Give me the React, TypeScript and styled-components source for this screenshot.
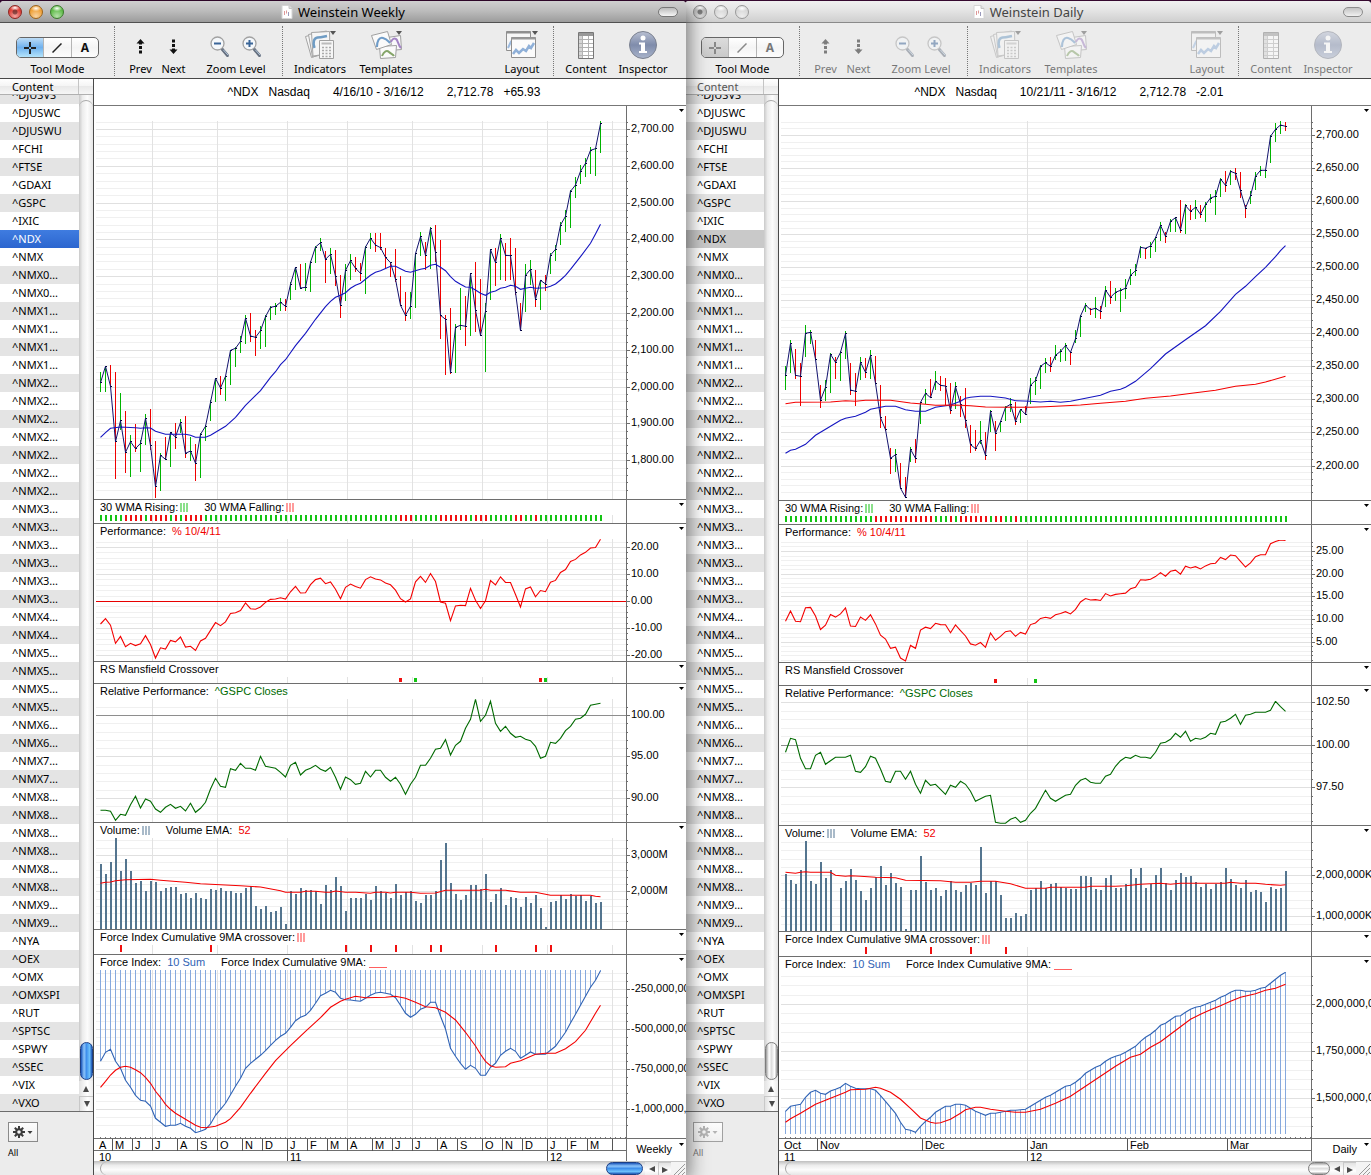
import React from 'react';
import styled, { createGlobalStyle, css } from 'styled-components';

/* ---------- data ---------- */

type Bar = { close: number; up: boolean; high: number; low: number };
type Point = [number, number];

const parseBars = (s: string): Bar[] =>
  s.trim().split(/\s+/).map((t) => {
    const m = /^(\d+)([gr])(\d+)-(\d+)$/.exec(t)!;
    return { close: +m[1], up: m[2] === 'g', high: +m[3], low: +m[4] };
  });

const parseKeyed = (s: string): Point[] =>
  s.trim().split(/\s+/).map((t) => t.split(':').map(Number) as Point);

const parseSeries = (s: string): Point[] => s.trim().split(/\s+/).map((t, i) => [i, Number(t)] as Point);

const parseRuns = (s: string): boolean[] => {
  const out: boolean[] = [];
  for (const m of s.matchAll(/(\d+)([gr])/g)) for (let i = 0; i < +m[1]; i++) out.push(m[2] === 'g');
  return out;
};

/* Samples are stored in thirds of a pixel below the `from` line of their series. */
const STEP = 5;
const FIRST = 6.5;
const px = (i: number) => FIRST + i * STEP;
const py = (from: number, v: number) => from + v / 3;

const weeklyBars = parseBars(`848g816-876 799g800-876 859r795-862 1025r816-1137 962g879-990 1057r933-1119 1025g1005-1131 1046r972-1056
1030g1020-1116 955g942-1035 1037r927-1050 1160r1023-1194 1066g1060-1173 1078r1011-1078 998g998-1101 1011r969-1047 967g957-1000
1060r948-1074 1053g1010-1083 1090r1032-1143 1003g1000-1134 979g975-1023 907g900-963 835g835-906 864r828-885 829g829-903
751g750-855 745g741-801 724g708-759 655g645-732 708r639-726 712r690-768 692g678-747 650g645-741 622g618-660 619g609-645
607g594-633 619r597-633 553g546-600 502g502-570 564r492-564 562g489-573 487g483-576 441g438-489 428g414-453 478r453-549
463g444-522 529r450-558 616r525-654 511g492-603 482g462-540 505r471-516 520r489-543 441g438-582 415g399-447 435r399-456
443r399-450 472r444-507 488r486-531 538r447-547 616r528-618 646r575-663 619g575-657 461g458-624 410g396-468 466r426-510
385g381-507 458r375-487 646r420-717 658r645-825 818r624-822 682g672-819 676g564-690 679r588-738 521g518-708 631r486-696
706r537-706 634g609-816 449g447-600 488r444-558 415g402-540 466r429-543 467r414-540 577r444-585 692r609-692 526g492-636
508g480-555 598r510-621 541g540-630 552r525-573 465g460-522 448g435-483 375g366-435 349g330-396 274g270-384 255g231-294
214g195-252 190g174-231 151g141-222 146g144-228 71g63-159`);

const dailyBars = parseBars(`826g798-870 730g720-819 826r747-837 829r789-918 700g675-771 697g690-732 778r720-780 901r855-924
862g840-903 763g760-879 787r771-837 757g754-843 701g693-777 870r789-885 874r819-918 787g771-840 817r774-834 766g750-837
850r768-852 953r855-984 989r948-992 1075r1044-1122 1064g1047-1116 1165r1089-1168 1192r1131-1192 1048g1041-1086
1075r1017-1089 907g905-972 880g867-912 893r837-895 844g813-870 856r828-873 858r834-916 932r849-942 860g846-927
912r888-951 961r864-984 1034r975-1059 1046r990-1053 1021g963-1032 1066r996-1080 934g930-996 1000r963-1053 965g962-996
922g918-963 913g894-936 964r906-975 928g928-969 943r918-945 856g834-912 841g831-885 799g796-867 788g774-819 799r771-816
766g735-780 754g748-786 737g729-783 757r755-795 716g690-729 648g645-711 615g609-636 629r624-645 625g591-654 634r618-657
570g558-621 592r543-612 577g564-603 571g564-636 565g537-597 526g507-555 512g492-528 442g438-474 445r445-477 438g426-474
413g410-456 376g366-423 409r396-429 364g357-396 353g350-396 390r300-399 317g312-402 334r315-360 322g300-357 343r315-354
314g306-366 294g282-309 289g270-345 237g234-291 256r213-276 214g210-255 220r204-240 272r216-294 324r316-354 287g273-312
229g216-270 211g198-228 211g209-234 109g106-189 88g69-126 75g63-102 79r66-93`);

const weeklyAverage = parseKeyed(`0:1012 1:998 2:985 4:981 5:982 7:983 8:985 9:983 10:984 11:994 13:1003 17:1003 18:1006 19:1012 21:1012
22:1006 25:979 27:952 29:916 32:872 34:832 35:815 36:794 37:779 39:737 41:700 43:658 45:620 46:604 47:592 48:586 49:578 50:565
51:556 52:550 54:526 55:517 56:512 58:499 59:499 60:506 61:514 62:517 64:508 65:505 66:496 67:493 68:502 69:512 70:530 71:544
72:553 73:561 74:562 75:570 76:580 77:586 78:577 79:573 80:565 81:562 82:556 83:559 84:568 85:565 86:562 87:565 89:563 90:559
91:552 92:540 93:526 94:508 96:470 98:430 99:402 100:373`);
const dailyAverage = parseKeyed(`0:1060 1:1051 2:1048 4:1033 6:1006 9:979 11:961 12:955 14:949 16:937 17:928 20:919 22:919 24:929 26:934
28:934 30:922 33:915 35:904 36:895 37:892 39:889 41:889 44:894 46:902 49:904 51:906 53:904 55:907 57:904 60:895 63:886 65:874
67:868 68:862 70:844 73:806 76:762 80:719 84:677 87:634 90:583 92:559 94:530 96:502 98:470 99:452 100:437`);
const dailyLongAverage = parseKeyed(`0:911 2:907 9:906 12:902 14:904 16:901 21:901 25:909 28:913 30:916 34:915 37:917 40:921 45:922 49:922
52:920 56:917 59:915 63:910 68:904 72:895 77:888 82:878 86:871 90:859 94:853 96:846 100:829`);

const weeklyRelative = parseSeries(`946 946 949 976 958 961 929 904 939 912 919 942 952 937 928 940 934 948 925 952 940 922 882 850 874 877
821 826 805 820 820 826 784 814 817 820 832 846 811 802 840 826 820 811 823 829 817 847 883 846 854 868 865 829 846 826 826 847 859
847 868 898 868 847 811 811 790 763 760 734 780 751 739 700 673 613 679 661 619 685 709 694 715 727 724 733 737 754 790 784 742 745
730 707 694 673 670 658 631 628 625`);
const dailyRelative = parseSeries(`772 730 734 790 821 821 781 772 808 797 787 787 787 781 829 832 815 784 790 822 859 862 829 829 853 829
868 895 856 871 868 883 898 871 877 859 868 889 919 911 904 901 982 985 985 973 967 982 976 955 940 913 886 910 919 910 901 898 871
856 850 862 865 865 844 838 814 797 787 790 781 787 787 790 772 745 742 733 715 727 709 739 730 733 727 715 718 682 679 670 658 688
661 658 652 652 652 646 619 635 649`);

const weeklyVolume = parseSeries(`133 163 127 55 154 118 154 190 184 214 184 187 214 205 202 202 223 220 235 220 235 238 208 211 205 214 214
220 220 205 199 259 268 259 277 274 262 313 214 223 205 211 211 214 253 196 211 172 199 274 235 235 235 223 241 199 214 220 235 193
226 217 214 244 250 226 226 214 121 70 190 223 241 226 196 196 208 163 247 223 205 256 232 235 262 232 250 226 265 322 247 244 226
238 223 229 226 244 229 250 247`);
const dailyVolume = parseSeries(`163 179 193 151 64 184 193 127 175 151 333 203 184 148 179 214 241 203 172 139 196 160 190 202 328 211 211
109 187 209 205 229 209 184 209 217 196 190 196 82 220 184 184 226 295 295 280 289 283 211 205 184 205 193 190 202 205 208 208 169 169
172 208 211 175 166 203 205 193 148 175 145 205 193 166 145 190 211 181 160 172 169 187 202 193 208 193 187 145 178 196 205 181 217
211 217 247 202 208 205 154`);
const weeklyVolumeEma = parseKeyed(`0:190 1:187 2:186 3:182 5:179 10:178 12:181 17:187 20:191 24:194 28:197 32:201 36:212 37:217 40:217
41:214 43:214 45:217 46:217 47:213 49:217 51:217 54:220 55:217 57:217 58:219 59:217 62:217 64:220 67:219 69:211 76:211 77:208 78:211
81:211 84:217 87:217 90:226 98:226 99:229 100:230`);
const dailyVolumeEma = parseKeyed(`0:157 1:158 2:160 3:157 4:155 5:157 9:157 10:166 12:169 13:167 15:169 18:172 22:173 24:181 31:182 34:187
37:187 39:184 42:184 45:191 47:200 48:205 52:205 53:202 60:202 61:199 66:199 68:197 71:193 75:190 77:193 79:190 88:190 89:187 91:190
94:190 96:193 99:196 100:194`);

const weeklyForce = parseSeries(`724 697 688 724 745 781 802 826 841 844 858 895 907 919 916 916 910 919 925 938 934 928 912 886 868 850 824
799 775 745 730 718 706 692 676 661 649 640 622 602 592 586 571 550 527 520 511 517 535 539 540 542 544 535 526 519 517 520 523 533
556 580 592 583 568 562 547 547 589 627 685 709 730 748 736 745 766 766 742 730 706 694 685 694 715 706 696 703 703 703 691 679 658
637 609 583 556 529 502 481 452`);
const weeklyForceAverage = parseKeyed(`0:802 1:784 2:765 3:751 4:742 5:739 6:742 7:749 8:758 9:772 10:790 11:814 12:832 13:853 14:868
15:880 17:898 19:916 20:922 21:923 23:919 25:907 26:896 28:862 30:820 33:760 35:722 38:677 41:634 44:593 46:562 48:544 49:538 51:529
53:533 57:532 59:529 61:535 63:547 65:560 67:563 69:577 71:600 73:637 75:678 76:703 77:724 78:737 79:742 81:740 82:730 84:722 87:703
89:700 91:700 93:686 95:665 97:631 99:580 100:556`);
const dailyForce = parseSeries(`874 859 856 853 832 817 811 820 823 813 808 802 790 799 805 806 806 806 811 827 844 862 880 907 928 931 937
919 904 892 877 868 859 859 853 853 856 865 874 880 886 880 880 877 874 871 871 869 868 859 850 841 832 826 817 808 799 796 787 775
760 751 742 736 724 715 709 704 697 688 679 664 652 643 631 616 610 599 589 587 577 568 562 559 553 547 541 532 526 517 511 511 514
514 511 505 502 490 478 466 457`);
const dailyForceAverage = parseKeyed(`0:907 1:896 3:880 5:862 6:853 8:841 10:829 12:817 13:809 16:808 18:802 19:805 21:817 23:838 25:865
27:894 29:907 30:910 31:908 33:898 35:880 36:869 38:862 39:862 41:868 44:874 46:877 48:877 51:868 54:850 57:829 60:799 63:769 66:739
69:712 71:703 73:682 75:665 77:643 79:620 81:598 83:583 85:569 87:557 89:544 91:532 94:521 96:511 98:505 100:493`);

type Mark = { at: number; color: string };
type Scale = { first: number; step: number; minors: number; labels: string[]; from: number; to: number };

type PanelSpec = {
  top: number;
  height: number;
  caption?: { text: string; extra?: string; color?: string; bars?: string; dash?: string }[];
  scale?: Scale;
  level?: { y: number; color: string };
  stems?: { points: Point[]; from: number; base: number; width: number; color: string };
  lines?: { points: Point[]; from: number; color: string }[];
  candles?: { bars: Bar[]; from: number };
  strip?: { flags: boolean[]; y: number };
  marks?: { list: Mark[]; y: number; height: number; width: number };
  gridFrom?: number;
  dayTicks?: boolean;
};

type Cell = [string, number];
type DocSpec = {
  title: string;
  active: boolean;
  dates: string;
  change: string;
  period: string;
  verticals: number[];
  panels: PanelSpec[];
  months: Cell[];
  years: Cell[];
};

const RED = '#f40000';
const MARK_RED = '#f01010';
const MARK_GREEN = '#14c414';
const GREEN = '#006a00';
const BLUE = '#1414c0';
const STEEL = '#54758f';
const FORCE = '#2f62b4';
const STEM = '#86a9de';

const performance = (bars: Bar[], base: number, ratio: number): Point[] =>
  bars.map((b, i) => [i, base + (b.close - bars[0].close) * ratio] as Point);

const captions = {
  wma: [
    { text: '30 WMA Rising:', bars: '#8be08b' },
    { text: '30 WMA Falling:', bars: '#ff9c9c' },
  ],
  perf: [{ text: 'Performance:', extra: '% 10/4/11', color: '#f00000' }],
  rs: [{ text: 'RS Mansfield Crossover' }],
  rel: [{ text: 'Relative Performance:', extra: '^GSPC Closes', color: GREEN }],
  vol: [{ text: 'Volume:', bars: '#a9bac9' }, { text: 'Volume EMA:', extra: '52', color: '#f00000' }],
  cross: [{ text: 'Force Index Cumulative 9MA crossover:', bars: '#ff9c9c' }],
  force: [
    { text: 'Force Index:', extra: '10 Sum', color: '#2f62b4' },
    { text: 'Force Index Cumulative 9MA:', dash: '#ff6060' },
  ],
};

const marks = (list: number[], color: string): Mark[] => list.map((at) => ({ at, color }));

const weekly: DocSpec = {
  title: 'Weinstein Weekly',
  active: true,
  dates: '4/16/10 - 3/16/12',
  change: '+65.93',
  period: 'Weekly',
  verticals: [152, 217, 287, 347, 412, 482, 547, 612].map((v) => v - 94),
  panels: [
    {
      top: 106, height: 394, gridFrom: 121,
      scale: { first: 129, step: 36.8, minors: 5, from: 121, to: 493, labels: ['2,700.00', '2,600.00', '2,500.00', '2,400.00', '2,300.00', '2,200.00', '2,100.00', '2,000.00', '1,900.00', '1,800.00'] },
      candles: { bars: weeklyBars, from: 100 },
      lines: [{ points: weeklyAverage, from: 100, color: BLUE }],
    },
    { top: 500, height: 24, caption: captions.wma, strip: { flags: parseRuns('5g4r1g4r1g1r1g4r39g3r5g6r1g3r5g2r2g1r13g'), y: 515 } },
    {
      top: 524, height: 138, caption: captions.perf,
      scale: { first: 547, step: 27, minors: 5, from: 540, to: 660, labels: ['20.00', '10.00', '0.00', '-10.00', '-20.00'] },
      level: { y: 601, color: '#e80000' },
      lines: [{ points: performance(weeklyBars, 387, 0.327), from: 495, color: RED }],
    },
    { top: 662, height: 22, caption: captions.rs, marks: { y: 678, height: 4, width: 3, list: [...marks([60, 88], MARK_RED), ...marks([63, 89], MARK_GREEN)] } },
    {
      top: 684, height: 139, caption: captions.rel,
      scale: { first: 715, step: 41.4, minors: 5, from: 703, to: 820, labels: ['100.00', '95.00', '90.00'] },
      level: { y: 715, color: '#8e8e8e' },
      lines: [{ points: weeklyRelative, from: 495, color: GREEN }],
    },
    {
      top: 823, height: 107, caption: captions.vol,
      scale: { first: 855, step: 36.4, minors: 5, from: 839, to: 926, labels: ['3,000M', '2,000M'] },
      stems: { points: weeklyVolume, from: 820, base: 930, width: 2, color: STEEL },
      lines: [{ points: weeklyVolumeEma, from: 820, color: RED }],
    },
    { top: 930, height: 25, caption: captions.cross, marks: { y: 945, height: 7, width: 2, list: marks([4, 22, 49, 54, 59, 66, 68, 79, 87, 90], MARK_RED) } },
    {
      top: 955, height: 184, caption: captions.force, dayTicks: true,
      scale: { first: 989, step: 40, minors: 5, from: 972, to: 1130, labels: ['-250,000,000', '-500,000,000', '-750,000,000', '-1,000,000,000'] },
      stems: { points: weeklyForce, from: 820, base: 970, width: 1, color: STEM },
      lines: [{ points: weeklyForce, from: 820, color: FORCE }, { points: weeklyForceAverage, from: 820, color: RED }],
    },
  ],
  months: [['A', 18], ['M', 20], ['J', 20], ['J', 25], ['A', 20], ['S', 20], ['O', 25], ['N', 20], ['D', 25], ['J', 20], ['F', 20], ['M', 20], ['A', 25], ['M', 20], ['J', 20], ['J', 25], ['A', 20], ['S', 25], ['O', 20], ['N', 20], ['D', 25], ['J', 20], ['F', 20], ['M', 25], ['', 14]],
  years: [['10', 193], ['11', 260], ['12', 79]],
};

const daily: DocSpec = {
  title: 'Weinstein Daily',
  active: false,
  dates: '10/21/11 - 3/16/12',
  change: '-2.01',
  period: 'Daily',
  verticals: [248],
  panels: [
    {
      top: 106, height: 395, gridFrom: 121,
      scale: { first: 135, step: 33.05, minors: 5, from: 121, to: 496, labels: ['2,700.00', '2,650.00', '2,600.00', '2,550.00', '2,500.00', '2,450.00', '2,400.00', '2,350.00', '2,300.00', '2,250.00', '2,200.00'] },
      candles: { bars: dailyBars, from: 100 },
      lines: [{ points: dailyAverage, from: 100, color: BLUE }, { points: dailyLongAverage, from: 100, color: RED }],
    },
    { top: 501, height: 24, caption: captions.wma, strip: { flags: parseRuns('18g12r3g1r1g6r1g2r2g1r54g'), y: 516 } },
    {
      top: 525, height: 138, caption: captions.perf,
      scale: { first: 551, step: 22.7, minors: 5, from: 541, to: 660, labels: ['25.00', '20.00', '15.00', '10.00', '5.00'] },
      lines: [{ points: performance(dailyBars, 379, 0.325), from: 495, color: RED }],
    },
    { top: 663, height: 23, caption: captions.rs, marks: { y: 679, height: 4, width: 3, list: [...marks([42], MARK_RED), ...marks([50], MARK_GREEN)] } },
    {
      top: 686, height: 140, caption: captions.rel,
      scale: { first: 702, step: 42.6, minors: 5, from: 701, to: 822, labels: ['102.50', '100.00', '97.50'] },
      level: { y: 745, color: '#8e8e8e' },
      lines: [{ points: dailyRelative, from: 495, color: GREEN }],
    },
    {
      top: 826, height: 106, caption: captions.vol,
      scale: { first: 875, step: 41.2, minors: 5, from: 841, to: 928, labels: ['2,000,000K', '1,000,000K'] },
      stems: { points: dailyVolume, from: 820, base: 931, width: 2, color: STEEL },
      lines: [{ points: dailyVolumeEma, from: 820, color: RED }],
    },
    { top: 932, height: 25, caption: captions.cross, marks: { y: 947, height: 7, width: 2, list: marks([16, 29, 37, 44], MARK_RED) } },
    {
      top: 957, height: 182, caption: captions.force, dayTicks: true,
      scale: { first: 1004, step: 47, minors: 5, from: 973, to: 1132, labels: ['2,000,000,000', '1,750,000,000', '1,500,000,000'] },
      stems: { points: dailyForce, from: 820, base: 1134, width: 1, color: STEM },
      lines: [{ points: dailyForce, from: 820, color: FORCE }, { points: dailyForceAverage, from: 820, color: RED }],
    },
  ],
  months: [['Oct', 38], ['Nov', 105], ['Dec', 105], ['Jan', 100], ['Feb', 100], ['Mar', 84]],
  years: [['11', 248], ['12', 284]],
};

const repeat = (label: string, n: number) => Array<string>(n).fill(label);
const symbols = [
  '^DJUSVS', '^DJUSWC', '^DJUSWU', '^FCHI', '^FTSE', '^GDAXI', '^GSPC', '^IXIC', '^NDX', '^NMX',
  ...repeat('^NMX0…', 2), ...repeat('^NMX1…', 4), ...repeat('^NMX2…', 7), ...repeat('^NMX3…', 6),
  ...repeat('^NMX4…', 2), ...repeat('^NMX5…', 4), ...repeat('^NMX6…', 2), ...repeat('^NMX7…', 2),
  ...repeat('^NMX8…', 6), ...repeat('^NMX9…', 2),
  '^NYA', '^OEX', '^OMX', '^OMXSPI', '^RUT', '^SPTSC', '^SPWY', '^SSEC', '^VIX', '^VXO',
];

/* ---------- styles ---------- */

const UI = `"Lucida Grande", "Noto Sans", "Open Sans", sans-serif`;
const SANS = `"Liberation Sans", Arial, sans-serif`;

const Global = createGlobalStyle`
  * { box-sizing: border-box; }
  body { margin: 0; background: #35082f; font-family: ${UI}; font-size: 11px; color: #000; }
  button { font: inherit; color: inherit; border: 0; padding: 0; margin: 0; background: none; }
  svg { display: block; }
`;

const Desktop = styled.main`
  display: flex;
  padding-top: 1px;
  overflow: hidden;
`;

const Window = styled.section<{ $active: boolean }>`
  flex: 1 1 0;
  min-width: 0;
  display: flex;
  flex-direction: column;
  background: #ececec;
  border-radius: 4px 4px 0 0;
  position: relative;
  ${(p) =>
    p.$active
      ? css`
          z-index: 1;
          box-shadow: 2px 6px 20px rgba(0, 0, 0, 0.55);
        `
      : css`
          margin-left: -1px;
        `}
`;

const TitleBar = styled.header<{ $active: boolean }>`
  display: flex;
  align-items: center;
  height: 22px;
  padding: 0 8px;
  border-radius: 4px 4px 0 0;
  border-bottom: 1px solid ${(p) => (p.$active ? '#515151' : '#8a8a8a')};
  background: ${(p) => (p.$active ? 'linear-gradient(#d0d0d0, #bdbdbd 45%, #9c9c9c)' : 'linear-gradient(#f0f0f0, #e4e4e4 45%, #cfcfcf)')};
`;

const Lights = styled.div`
  display: flex;
  gap: 7px;
  width: 64px;
`;

const Light = styled.button<{ $tint: string; $edge: string }>`
  width: 14px;
  height: 14px;
  border-radius: 50%;
  border: 1px solid ${(p) => p.$edge};
  background: radial-gradient(ellipse 5px 3px at 50% 20%, #fff, transparent),
    radial-gradient(circle at 50% 85%, #fff8, transparent 60%), ${(p) => p.$tint};
  &:first-child {
    background: radial-gradient(circle at 50% 50%, #0006 2px, transparent 3px),
      radial-gradient(ellipse 5px 3px at 50% 15%, #fff, transparent),
      radial-gradient(circle at 50% 85%, #fff8, transparent 60%), ${(p) => p.$tint};
  }
`;

const Title = styled.h1<{ $active: boolean }>`
  flex: 1;
  display: flex;
  justify-content: center;
  align-items: center;
  gap: 5px;
  margin: 0;
  font-size: 13px;
  line-height: 20px;
  font-weight: 400;
  color: ${(p) => (p.$active ? '#000' : '#444')};
`;

const PillSlot = styled.div`
  display: flex;
  justify-content: flex-end;
  width: 64px;
`;

const Pill = styled.button<{ $active: boolean }>`
  width: 20px;
  height: 10px;
  border: 1px solid #777;
  border-radius: 5px;
  opacity: ${(p) => (p.$active ? 1 : 0.8)};
  background: linear-gradient(#bbb, #f6f6f6);
`;

const Toolbar = styled.nav`
  display: flex;
  height: 56px;
  padding: 3px 15px 0 16px;
  border-bottom: 1px solid #474747;
  background: #ececec;
`;

const toolColumn = css<{ $width: number; $dim?: boolean }>`
  display: flex;
  flex-direction: column;
  align-items: center;
  width: ${(p) => p.$width}px;
  opacity: ${(p) => (p.$dim ? 0.5 : 1)};
`;

const Tool = styled.button<{ $width: number; $dim?: boolean }>`
  ${toolColumn}
`;

const ToolSet = styled.div<{ $width: number; $dim?: boolean }>`
  ${toolColumn}
`;

const Glyph = styled.span<{ $small?: boolean }>`
  display: flex;
  align-items: center;
  justify-content: center;
  gap: 12px;
  height: 36px;
  padding-top: ${(p) => (p.$small ? 5 : 1)}px;
`;

const ToolLabel = styled.span`
  font-size: 11px;
  line-height: 14px;
  white-space: nowrap;
`;

const Divider = styled.hr<{ $before: number; $after: number }>`
  width: 0;
  height: 50px;
  border: 0;
  border-left: 1px dotted #777;
  margin: 0 ${(p) => p.$after}px 0 ${(p) => p.$before}px;
`;

const Spacer = styled.div<{ $width?: number }>`
  flex: ${(p) => (p.$width ? `0 0 ${p.$width}px` : '1')};
`;

const Segments = styled.div`
  display: flex;
  width: 83px;
  height: 21px;
  margin: 11px 0 4px;
  border: 1px solid #666;
  border-radius: 5px;
  overflow: hidden;
  background: linear-gradient(#fff, #f4f4f4 50%, #fdfdfd);
`;

const Segment = styled.button<{ $muted: boolean }>`
  flex: 1;
  display: flex;
  align-items: center;
  justify-content: center;
  font: 700 12px/19px ${UI};
  color: ${(p) => (p.$muted ? '#777' : '#111')};
  & + & {
    border-left: 1px solid #b5b5b5;
  }
  &[aria-pressed='true'] {
    background: ${(p) => (p.$muted ? 'linear-gradient(#dcdcdc, #c9c9c9)' : 'linear-gradient(#bcdcf6, #6fb1ee 50%, #b4e4fb)')};
  }
`;

const Body = styled.div`
  display: flex;
  flex: 1;
`;

const Sidebar = styled.aside`
  flex: 0 0 93px;
  display: flex;
  flex-direction: column;
`;

const ListHeader = styled.div<{ $active: boolean }>`
  display: flex;
  height: 16px;
  border-bottom: 1px solid #b0b0b0;
  background: linear-gradient(#fff, #f4f4f4 50%, #e9e9e9 50%, #f6f6f6);
  color: ${(p) => (p.$active ? '#000' : '#555')};
  line-height: 16px;
  span {
    width: 79px;
    padding-left: 12px;
    border-right: 1px solid #c4c4c4;
  }
`;

const ListArea = styled.div`
  display: flex;
  flex: 1;
  overflow: hidden;
  border-bottom: 1px solid #6c6c6c;
`;

const SymbolList = styled.ul`
  flex: 0 0 79px;
  margin: -9px 0 -1px;
  padding: 0;
  list-style: none;
`;

const SymbolRow = styled.li<{ $selected: boolean; $active: boolean }>`
  height: 18px;
  padding-left: 12px;
  font-size: 11px;
  line-height: 18px;
  background: #fff;
  &:nth-child(odd) {
    background: #e4e4e4;
  }
  ${(p) =>
    p.$selected &&
    css`
      &&:nth-child(odd) {
        background: ${p.$active ? 'linear-gradient(#3f7ce0, #2c66cf)' : '#c9c9c9'};
        color: ${p.$active ? '#fff' : '#000'};
      }
    `}
`;

const VScroll = styled.div`
  flex: 0 0 14px;
  display: flex;
  flex-direction: column;
  background: linear-gradient(90deg, #c9c9c9, #ececec 25%, #fcfcfc 60%, #e6e6e6);
`;

const VTrack = styled.div`
  flex: 1;
  display: flex;
  flex-direction: column;
  justify-content: flex-end;
  margin-top: 5px;
  border-top: 1px solid #a8a8a8;
  border-radius: 8px 8px 0 0;
`;

const thumbFill = (active: boolean, angle: string) =>
  active
    ? `linear-gradient(${angle}, #1a55ba, #8cc4fa 28%, #3f90ec 50%, #6cc0fb 78%, #1c54b4)`
    : `linear-gradient(${angle}, #9a9a9a, #fff 28%, #dedede 50%, #fff 78%, #9a9a9a)`;

const VThumb = styled.div<{ $active: boolean }>`
  height: 38px;
  margin: 0 0 1px 1px;
  border: 1px solid ${(p) => (p.$active ? '#1c3f86' : '#7c7c7c')};
  border-radius: 7px;
  background: ${(p) => thumbFill(p.$active, '90deg')};
`;

const ScrollArrow = styled.button<{ $vertical?: boolean }>`
  flex: 0 0 auto;
  display: flex;
  align-items: center;
  justify-content: center;
  width: ${(p) => (p.$vertical ? 14 : 13)}px;
  height: ${(p) => (p.$vertical ? 15 : 14)}px;
  background: ${(p) => (p.$vertical ? 'linear-gradient(90deg, #e2e2e2, #fff 60%, #ececec)' : 'linear-gradient(#e2e2e2, #fff 60%, #ececec)')};
  & + & {
    ${(p) => (p.$vertical ? 'border-top' : 'border-left')}: 1px solid #c8c8c8;
  }
`;

const SideFooter = styled.footer<{ $dim: boolean }>`
  display: flex;
  flex-direction: column;
  align-items: flex-start;
  gap: 4px;
  height: 63px;
  padding: 10px 8px 0;
  font-size: 9px;
  line-height: 14px;
  color: ${(p) => (p.$dim ? '#777' : '#000')};
`;

const GearButton = styled.button<{ $dim: boolean }>`
  display: flex;
  align-items: center;
  justify-content: center;
  gap: 2px;
  width: 30px;
  height: 20px;
  border: 1px solid ${(p) => (p.$dim ? '#a0a0a0' : '#8a8a8a')};
  background: linear-gradient(#fdfdfd, #efefef);
  color: ${(p) => (p.$dim ? '#b4b4b4' : '#3c3c3c')};
`;

const ChartArea = styled.div`
  flex: 1;
  min-width: 0;
  display: flex;
  flex-direction: column;
  border-left: 1px solid #4a4a4a;
  background: #fff;
  font-family: ${SANS};
`;

const Quote = styled.header`
  display: flex;
  justify-content: center;
  gap: 23px;
  height: 27px;
  padding-right: 12px;
  border-bottom: 1px solid #777;
  font-size: 12px;
  line-height: 26px;
  white-space: nowrap;
`;

const QuotePair = styled.span`
  display: flex;
  gap: 10px;
`;

const PanelBox = styled.section<{ $height: number }>`
  display: flex;
  height: ${(p) => p.$height}px;
  border-bottom: 1px solid #6e6e6e;
`;

const Plot = styled.div`
  flex: 1;
  min-width: 0;
  display: flex;
  flex-direction: column;
`;

const AxisBox = styled.div`
  flex: 0 0 60px;
  overflow: hidden;
  border-left: 1px solid #6e6e6e;
`;

const Caption = styled.div`
  display: flex;
  gap: 16px;
  height: 15px;
  padding-left: 6px;
  font-size: 11px;
  line-height: 15px;
  white-space: nowrap;
`;

const CaptionItem = styled.span`
  display: flex;
  align-items: center;
`;

const CaptionValue = styled.span<{ $color?: string }>`
  margin-left: 6px;
  color: ${(p) => p.$color};
`;

const BarsKey = styled.i<{ $color: string }>`
  width: 8px;
  height: 9px;
  margin-left: 2px;
  background: repeating-linear-gradient(90deg, ${(p) => p.$color} 0 2px, transparent 2px 3px);
`;

const LineKey = styled.i<{ $color: string }>`
  width: 18px;
  height: 11px;
  margin-left: 3px;
  border-bottom: 1px solid ${(p) => p.$color};
`;

const Drawing = styled.svg`
  width: 100%;
`;

const AxisText = styled.text`
  font: 11px ${SANS};
`;

const Timeline = styled.footer`
  display: flex;
  height: 22px;
`;

const TimeRows = styled.div`
  flex: 1;
  min-width: 0;
`;

const TimeRow = styled.div<{ $cells: Cell[]; $last?: boolean }>`
  display: grid;
  grid-template-columns: ${(p) => p.$cells.map(([, w]) => `minmax(0, ${w}fr)`).join(' ')};
  height: ${(p) => (p.$last ? 10 : 12)}px;
  border-bottom: ${(p) => (p.$last ? '0' : '1px solid #6e6e6e')};
`;

const TimeCell = styled.span`
  padding-left: 2px;
  font-size: 11px;
  line-height: 12px;
  & + & {
    border-left: 1px solid #555;
  }
  &:first-child {
    padding-left: 5px;
  }
`;

const Period = styled.button`
  flex: 0 0 60px;
  display: flex;
  justify-content: flex-end;
  gap: 7px;
  padding-right: 2px;
  border-left: 1px solid #6e6e6e;
  font: 11px/21px ${SANS};
  svg {
    margin-top: 4px;
  }
`;

const HScroll = styled.div`
  display: flex;
  height: 14px;
  border-top: 1px solid #c4c4c4;
  background: linear-gradient(#c9c9c9, #ececec 25%, #fcfcfc 60%, #e6e6e6);
`;

const HTrack = styled.div`
  flex: 1;
  display: flex;
  justify-content: flex-end;
  margin-left: 6px;
  border-left: 1px solid #a0a0a0;
  border-radius: 8px 0 0 8px;
`;

const HThumb = styled.div<{ $active: boolean }>`
  width: ${(p) => (p.$active ? 37 : 22)}px;
  margin-right: ${(p) => (p.$active ? 2 : 0)}px;
  border: 1px solid ${(p) => (p.$active ? '#1c3f86' : '#7c7c7c')};
  border-radius: 7px;
  background: ${(p) => thumbFill(p.$active, '180deg')};
`;

/* ---------- icons ---------- */

const Down = ({ w = 5, color = '#000' }: { w?: number; color?: string }) => (
  <svg width={w} height={3} viewBox="0 0 5 3"><path d="M0 0h5L2.5 3z" fill={color} /></svg>
);

const DocIcon = () => (
  <svg width="12" height="14" viewBox="0 0 12 14">
    <path d="M1 .5h7l3 3v10H1z" fill="#fff" stroke="#d4d4d4" />
    <path d="M8 .5v3h3" fill="#ddd" stroke="#c4c4c4" />
    <path d="M3.5 6v4M5.5 5.5v3" stroke="#d99" />
    <path d="M7.500 7v4" stroke="#99b" />
  </svg>
);

const Arrow = ({ down }: { down?: boolean }) => (
  <svg width="9" height="15" viewBox="0 0 9 15">
    <g transform={down ? 'rotate(180 4.5 7.5)' : undefined} fill="#111">
      <path d="M4.5 0L8.5 4.5H6v1H3v-1H.5z" />
      <path d="M3 7h3v3H3zM3 11.500h3v3H3z" />
    </g>
  </svg>
);

const Magnifier = ({ plus }: { plus?: boolean }) => (
  <svg width="20" height="22" viewBox="0 0 20 22">
    <path d="M12 13l5.500 6.500" stroke="#667080" strokeWidth="3" strokeLinecap="round" />
    <path d="M13.500 14l4.500 5" stroke="#b4c8dc" strokeWidth="1" strokeLinecap="round" />
    <circle cx="7.5" cy="7.5" r="6.5" fill="#f5f8fb" stroke="#a2a2a2" strokeWidth="1.300" />
    <path d={plus ? 'M4 7.5h7M7.5 4v7' : 'M4 7.5h7'} stroke="#3a6598" strokeWidth="2" />
  </svg>
);

const IndicatorsIcon = () => (
  <svg width="32" height="30" viewBox="0 0 32 30">
    <g fill="#f6f6f6" stroke="#a4a4a4">
      <path d="M1.500 6.500l15-4 5 20-14 5z" />
      <path d="M4.500 4.500l18-3.500 2 22-16 4z" />
      <path d="M7.500 2.500L25.500 1.500l.5 22L9 26z" />
    </g>
    <path d="M10.500 18C8.500 12 10 8 13.500 7.500c4 0 5-.5 9.500-1.500" fill="none" stroke="#6f9cc4" strokeWidth="2.500" />
    <path d="M15.500 10.500h14v18h-14z" fill="#f6f6f6" stroke="#a0a0a0" />
    <path d="M17.500 13.500h10" stroke="#bbb" strokeWidth="2" />
    <path d="M18 17.500h10M18 20.500h10M18 23.500h10M18 26.500h10" stroke="#aaa" strokeDasharray="2 1.500" strokeWidth="1.500" />
    <path d="M26 1h6l-3 4z" fill="#555" />
  </svg>
);

const TemplatesIcon = () => (
  <svg width="32" height="30" viewBox="0 0 32 30">
    <g fill="#fafafa" stroke="#a0a0a0">
      <path d="M17.500 7.500l13-2 1 14-12 1z" />
      <path d="M9.500 16.500l17-1-1 12-15 1z" />
      <path d="M1.500 5.500L17.500 1.500l4 13-15 5z" />
    </g>
    <path d="M7 17c0-6 2-10 6-9s5 3 7 5" fill="none" stroke="#6f9cc8" strokeWidth="2" />
    <path d="M21 12c1-3 3-4 5-3s2 6 5 9" fill="none" stroke="#a385c4" strokeWidth="2" />
    <path d="M12 26c2-5 5-6 7-4s4 2 5 4" fill="none" stroke="#84a468" strokeWidth="2" />
    <path d="M26 1h6l-3 4z" fill="#555" />
  </svg>
);

const LayoutIcon = () => (
  <svg width="32" height="30" viewBox="0 0 32 30">
    <path d="M.5 1.500h24v19H.5z" fill="#f7f7f7" stroke="#8f8f8f" />
    <path d="M.5 2.500h24" stroke="#8f8f8f" strokeWidth="2" />
    <path d="M2 18c3-6 3-8 5-7" fill="none" stroke="#9dbbe0" strokeWidth="2" />
    <path d="M5.500 7.500h24v20h-24z" fill="#fbfbfb" stroke="#8f8f8f" />
    <path d="M5.500 8.500h24" stroke="#999" strokeWidth="2" />
    <path d="M7 24l3-4 3 3 4-4 3 2 3-5 2 2 3-5" fill="none" stroke="#8fb0d8" strokeWidth="2.500" />
    <path d="M26 1h6l-3 4z" fill="#555" />
  </svg>
);

const ContentIcon = () => (
  <svg width="16" height="28" viewBox="0 0 16 28">
    <path d="M.5 1.500h15v26H.5z" fill="#fff" stroke="#777" />
    <path d="M1 2h14v3H1z" fill="#999" />
    <path d="M1 5h3v22H1z" fill="#d6d6d6" />
    <path d="M1 8.500h14M1 12.500h14M1 16.500h14M1 20.500h14M1 24.500h14M4.500 5v22M10.500 5v22" stroke="#b2b2b2" />
  </svg>
);

const InspectorIcon = () => (
  <svg width="30" height="30" viewBox="0 0 30 30">
    <defs>
      <linearGradient id="disc" x1="0" y1="0" x2="0" y2="1">
        <stop offset="0" stopColor="#b9c0d2" />
        <stop offset=".5" stopColor="#7f8cab" />
        <stop offset="1" stopColor="#a9b4cb" />
      </linearGradient>
    </defs>
    <circle cx="15" cy="15" r="13.500" fill="url(#disc)" stroke="#7c8290" />
    <circle cx="15" cy="8" r="2.500" fill="#fff" />
    <path d="M11 12.500h6v8.500h2v2h-8v-2h2v-6.500h-2z" fill="#fff" />
  </svg>
);

const GearIcon = () => (
  <svg width="12" height="12" viewBox="0 0 12 12">
    <g stroke="currentColor" strokeWidth="2">
      <path d="M6 0v3M6 9v3M0 6h3M9 6h3M1.800 1.800l2 2M8.200 8.200l2 2M1.800 10.200l2-2M8.200 3.800l2-2" />
      <circle cx="6" cy="6" r="2.800" fill="none" />
    </g>
  </svg>
);

const Triangle = ({ d }: { d: string }) => (
  <svg width="8" height="8" viewBox="0 0 8 8"><path d={d} fill="#4a4a4a" /></svg>
);

/* ---------- chart ---------- */

const PLOT_WIDTH = 532;

const gridLines = (s: Scale) => {
  const out: { y: number; major: boolean }[] = [];
  const unit = s.step / s.minors;
  const start = Math.ceil((s.from - s.first) / unit);
  const end = Math.floor((s.to - s.first) / unit);
  for (let k = start; k <= end; k++) out.push({ y: Math.round(s.first + k * unit) + 0.5, major: k % s.minors === 0 });
  return out;
};

const pathOf = (points: Point[], from: number) =>
  points.map(([i, v], k) => `${k ? 'L' : 'M'}${px(i)} ${py(from, v).toFixed(1)}`).join('');

const Panel = ({ spec, verticals }: { spec: PanelSpec; verticals: number[] }) => {
  const top = spec.top + (spec.caption ? 15 : 0);
  const bottom = spec.top + spec.height - 1;
  const gridTop = spec.gridFrom ?? top;
  const grid = spec.scale ? gridLines(spec.scale) : [];
  return (
    <PanelBox $height={spec.height}>
      <Plot>
        {spec.caption && (
          <Caption>
            {spec.caption.map((c) => (
              <CaptionItem key={c.text}>
                {c.text}
                {c.extra && <CaptionValue $color={c.color}>{c.extra}</CaptionValue>}
                {c.bars && <BarsKey $color={c.bars} />}
                {c.dash && <LineKey $color={c.dash} />}
              </CaptionItem>
            ))}
          </Caption>
        )}
        <Drawing height={bottom - top} viewBox={`0 ${top} ${PLOT_WIDTH} ${bottom - top}`} preserveAspectRatio="none" aria-hidden="true">
          <g shapeRendering="crispEdges">
            {grid.map((g) => (
              <path key={g.y} d={`M2 ${g.y}H${PLOT_WIDTH}`} stroke={g.major ? '#e0e0e0' : '#f0f0f0'} />
            ))}
            {verticals.map((v) => (
              <path key={v} d={`M${v + 0.5} ${gridTop}V${bottom}`} stroke="#e2e2e2" />
            ))}
            {spec.level && <path d={`M2 ${spec.level.y + 0.5}H${PLOT_WIDTH}`} stroke={spec.level.color} />}
            {spec.stems &&
              spec.stems.points.map(([i, v]) => {
                const y = Math.round(py(spec.stems!.from, v));
                const base = spec.stems!.base;
                return <rect key={i} x={px(i) - 0.5} y={Math.min(y, base)} width={spec.stems!.width} height={Math.abs(base - y)} fill={spec.stems!.color} />;
              })}
            {spec.candles &&
              spec.candles.bars.map((b, i) => (
                <path key={i} d={`M${px(i)} ${Math.round(py(spec.candles!.from, b.high))}V${Math.round(py(spec.candles!.from, b.low))}`} stroke={b.up ? '#00b400' : '#f00000'} />
              ))}
            {spec.candles && (
              <path d={spec.candles.bars.map((b, i) => `M${px(i) - 0.5} ${Math.floor(py(spec.candles!.from, b.close)) + 0.5}h2`).join('')} stroke="#000030" />
            )}
            {spec.strip &&
              spec.strip.flags.map((g, i) => <rect key={i} x={px(i) - 0.5} y={spec.strip!.y} width="2" height="6" fill={g ? MARK_GREEN : MARK_RED} />)}
            {spec.marks &&
              spec.marks.list.map((m) => (
                <rect key={m.at} x={px(m.at) - (spec.marks!.width === 3 ? 1.5 : 0.5)} y={spec.marks!.y} width={spec.marks!.width} height={spec.marks!.height} fill={m.color} />
              ))}
            {spec.dayTicks && <path d={`M6 ${bottom - 0.5}H${PLOT_WIDTH}`} stroke="#777" strokeDasharray="1 4" />}
          </g>
          {spec.candles && (
            <path d={pathOf(spec.candles.bars.map((b, i) => [i, b.close] as Point), spec.candles.from)} fill="none" stroke="#12126e" />
          )}
          {spec.lines?.map((l) => <path key={l.color} d={pathOf(l.points, l.from)} fill="none" stroke={l.color} strokeWidth="1.100" />)}
        </Drawing>
      </Plot>
      <AxisBox>
        <svg width="59" height={spec.height - 1} viewBox={`0 ${spec.top} 59 ${spec.height - 1}`}>
          <g shapeRendering="crispEdges">
            {grid.map((g) => (
              <path key={g.y} d={`M0 ${g.y}h${g.major ? 3 : 1}`} stroke="#6e6e6e" />
            ))}
          </g>
          {spec.scale?.labels.map((t, k) => (
            <AxisText key={t} x="4" y={Math.round(spec.scale!.first + k * spec.scale!.step) + 3}>{t}</AxisText>
          ))}
          <path d={`M52 ${spec.top + 3}h5l-2.500 3z`} />
        </svg>
      </AxisBox>
    </PanelBox>
  );
};

/* ---------- window ---------- */

const DocumentWindow = ({ doc }: { doc: DocSpec }) => {
  const { active } = doc;
  const dim = !active;
  return (
    <Window $active={active} aria-label={doc.title}>
      <TitleBar $active={active}>
        <Lights>
          <Light aria-label="Close" $tint={active ? '#e04038' : '#bdbdbd'} $edge={active ? '#8a2a26' : '#8e8e8e'} />
          <Light aria-label="Minimize" $tint={active ? '#f0a23a' : '#d8d8d8'} $edge={active ? '#9a6420' : '#9a9a9a'} />
          <Light aria-label="Zoom" $tint={active ? '#62bd4c' : '#d8d8d8'} $edge={active ? '#3c7a2e' : '#9a9a9a'} />
        </Lights>
        <Title $active={active}><DocIcon />{doc.title}</Title>
        <PillSlot><Pill aria-label="Toggle toolbar" $active={active} /></PillSlot>
      </TitleBar>
      <Toolbar>
        <ToolSet $width={83}>
          <Segments>
            <Segment aria-label="Crosshair" aria-pressed="true" $muted={dim}>
              <svg width="12" height="12" viewBox="0 0 12 12"><path d="M6 0v5M6 7v5M0 6h5M7 6h5" stroke={active ? '#222' : '#888'} strokeWidth="2" /></svg>
            </Segment>
            <Segment aria-label="Line" aria-pressed="false" $muted={dim}>
              <svg width="10" height="10" viewBox="0 0 10 10"><path d="M.5 9.500l9-9" stroke={active ? '#222' : '#888'} strokeWidth="1.500" /></svg>
            </Segment>
            <Segment aria-pressed="false" $muted={dim}>A</Segment>
          </Segments>
          <ToolLabel>Tool Mode</ToolLabel>
        </ToolSet>
        <Divider $before={15} $after={9} />
        <Tool $width={33} $dim={dim}><Glyph $small><Arrow /></Glyph><ToolLabel>Prev</ToolLabel></Tool>
        <Tool $width={33} $dim={dim}><Glyph $small><Arrow down /></Glyph><ToolLabel>Next</ToolLabel></Tool>
        <Spacer $width={14} />
        <ToolSet $width={64} $dim={dim}>
          <Glyph $small>
            <button aria-label="Zoom out"><Magnifier /></button>
            <button aria-label="Zoom in"><Magnifier plus /></button>
          </Glyph>
          <ToolLabel>Zoom Level</ToolLabel>
        </ToolSet>
        <Divider $before={14} $after={4} />
        <Tool $width={66} $dim={dim}><Glyph><IndicatorsIcon /></Glyph><ToolLabel>Indicators</ToolLabel></Tool>
        <Tool $width={66} $dim={dim}><Glyph><TemplatesIcon /></Glyph><ToolLabel>Templates</ToolLabel></Tool>
        <Spacer />
        <Tool $width={44} $dim={dim}><Glyph><LayoutIcon /></Glyph><ToolLabel>Layout</ToolLabel></Tool>
        <Divider $before={9} $after={3} />
        <Tool $width={58} $dim={dim}><Glyph><ContentIcon /></Glyph><ToolLabel>Content</ToolLabel></Tool>
        <Tool $width={56} $dim={dim}><Glyph><InspectorIcon /></Glyph><ToolLabel>Inspector</ToolLabel></Tool>
      </Toolbar>
      <Body>
        <Sidebar>
          <ListHeader $active={active}><span>Content</span></ListHeader>
          <ListArea>
            <SymbolList>
              {symbols.map((s, i) => (
                <SymbolRow key={i} $selected={s === '^NDX'} $active={active}>{s}</SymbolRow>
              ))}
            </SymbolList>
            <VScroll>
              <VTrack><VThumb $active={active} /></VTrack>
              <ScrollArrow $vertical aria-label="Scroll up"><Triangle d="M4 1l3 6H1z" /></ScrollArrow>
              <ScrollArrow $vertical aria-label="Scroll down"><Triangle d="M4 7l3-6H1z" /></ScrollArrow>
            </VScroll>
          </ListArea>
          <SideFooter $dim={dim}>
            <GearButton aria-label="Actions" $dim={dim}><GearIcon /><Down w={6} color="currentColor" /></GearButton>
            <span>All</span>
          </SideFooter>
        </Sidebar>
        <ChartArea>
          <Quote>
            <QuotePair><span>^NDX</span><span>Nasdaq</span></QuotePair>
            <span>{doc.dates}</span>
            <QuotePair><span>2,712.78</span><span>{doc.change}</span></QuotePair>
          </Quote>
          {doc.panels.map((p) => <Panel key={p.top} spec={p} verticals={doc.verticals} />)}
          <Timeline>
            <TimeRows>
              <TimeRow $cells={doc.months}>{doc.months.map(([t], i) => <TimeCell key={i}>{t}</TimeCell>)}</TimeRow>
              <TimeRow $cells={doc.years} $last>{doc.years.map(([t]) => <TimeCell key={t}>{t}</TimeCell>)}</TimeRow>
            </TimeRows>
            <Period>{doc.period}<Down /></Period>
          </Timeline>
          <HScroll>
            <HTrack><HThumb $active={active} /></HTrack>
            <ScrollArrow aria-label="Scroll left"><Triangle d="M1 4l6-3v6z" /></ScrollArrow>
            <ScrollArrow aria-label="Scroll right"><Triangle d="M7 4L1 1v6z" /></ScrollArrow>
            <svg width="15" height="14" viewBox="0 0 15 14">
              <path d="M0 0h15v14H0z" fill="#f4f4f4" />
              <path d="M3 13L14 2M7 13l7-7M11 13l3-3" stroke="#999" />
            </svg>
          </HScroll>
        </ChartArea>
      </Body>
    </Window>
  );
};

export default function App() {
  return (
    <>
      <Global />
      <Desktop>
        <DocumentWindow doc={weekly} />
        <DocumentWindow doc={daily} />
      </Desktop>
    </>
  );
}
